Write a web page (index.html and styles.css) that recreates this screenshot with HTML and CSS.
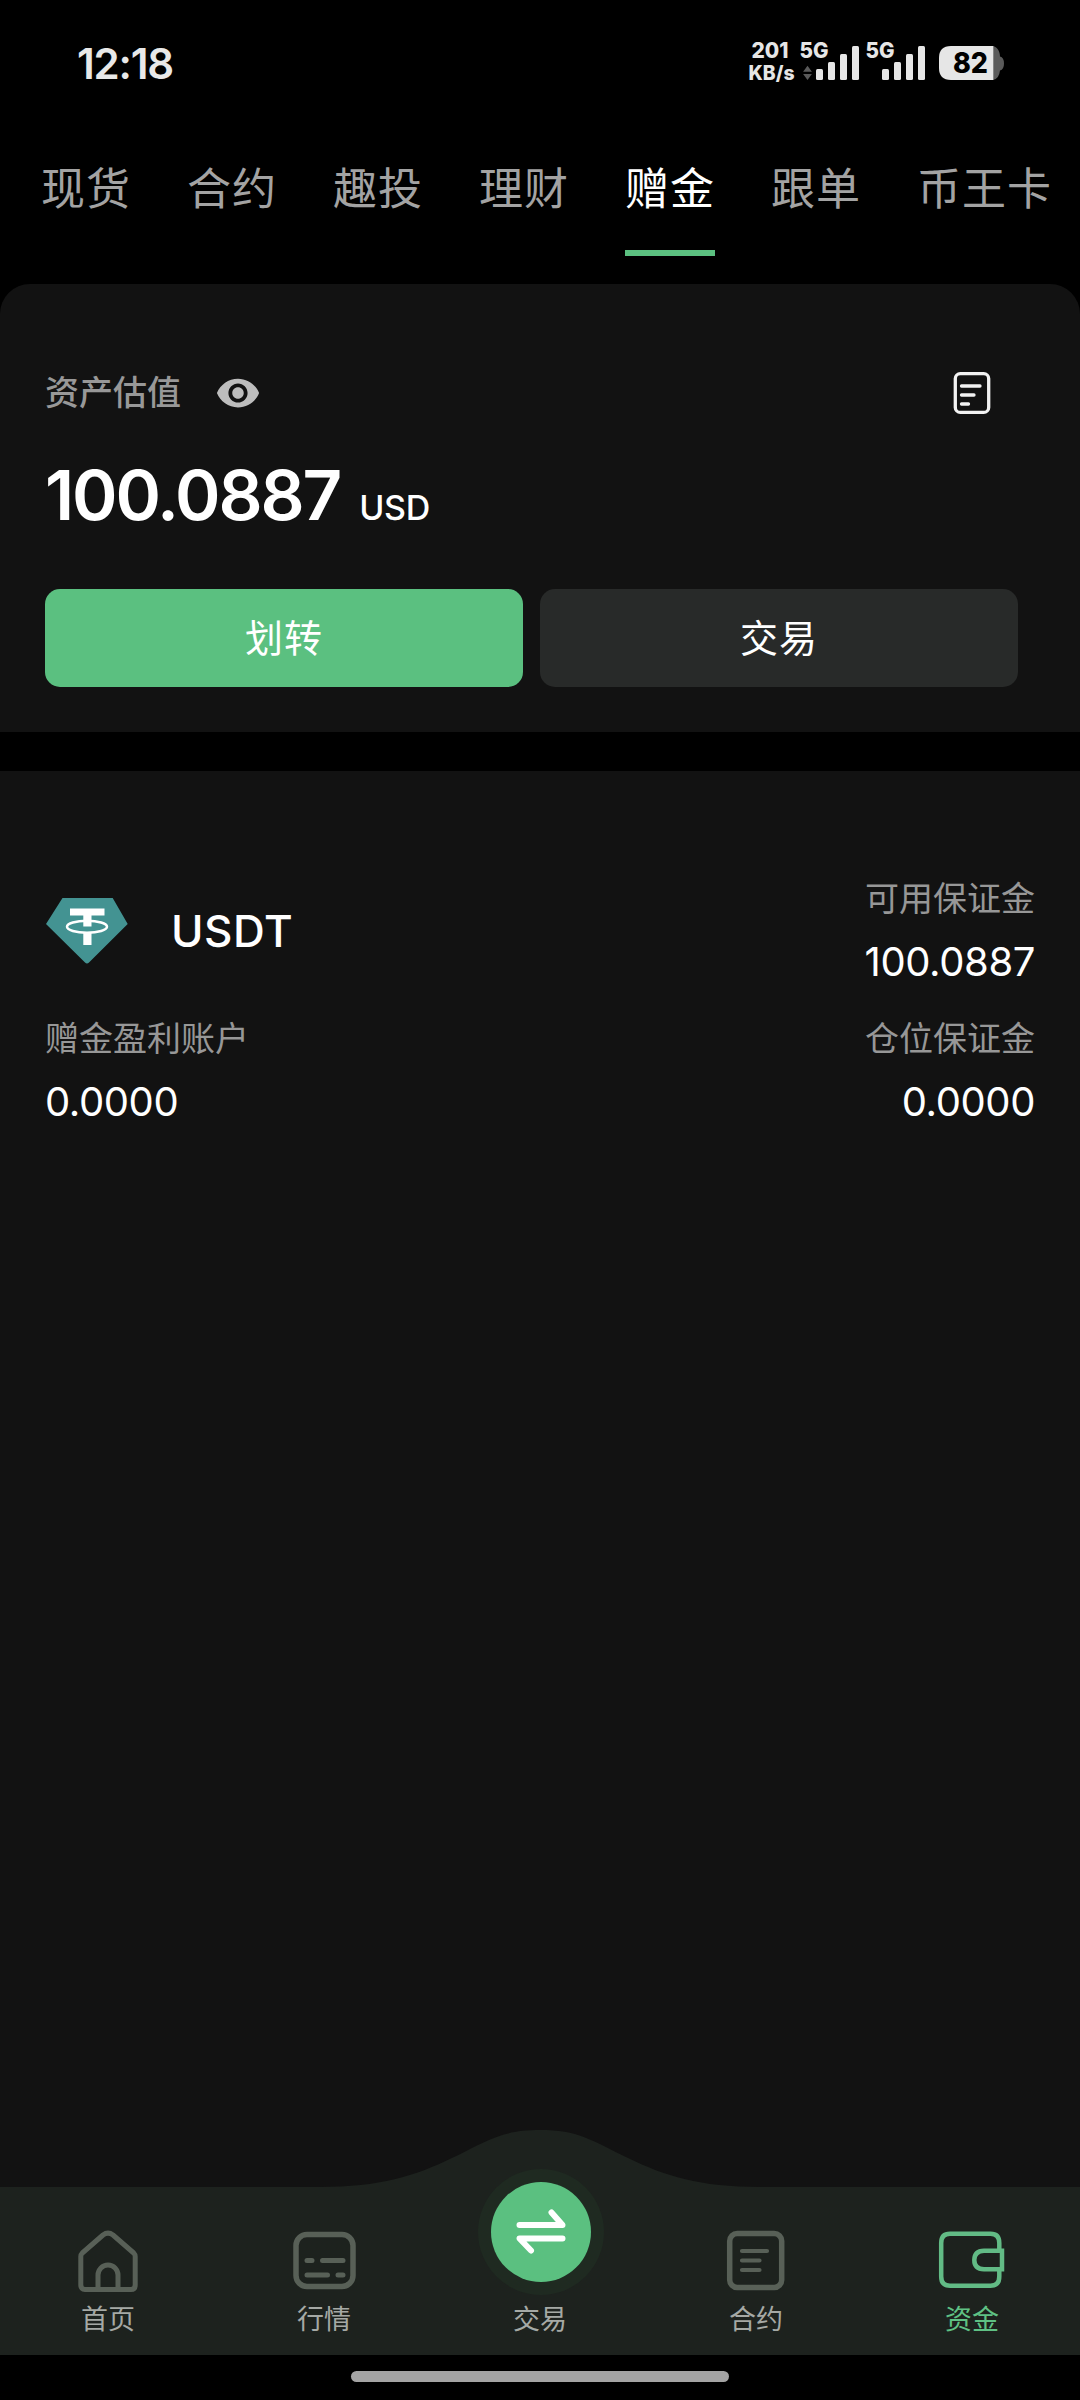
FILE: index.html
```html
<!DOCTYPE html>
<html lang="zh-CN">
<head>
<meta charset="utf-8">
<title>资金</title>
<link rel="stylesheet" href="styles.css">
</head>
<body>
<div class="screen">
  <header class="status">
    <div class="clock">12:18</div>
    <div class="status-icons">
      <svg class="speed" width="50" height="50" viewBox="0 0 50 50">
        <text x="2.500" y="20.5" font-size="22" textLength="37" lengthAdjust="spacingAndGlyphs">201</text>
        <text x="-0.500" y="43" font-size="19.500" textLength="46" lengthAdjust="spacingAndGlyphs">KB/s</text>
      </svg>
      <svg class="signal" width="60" height="44" viewBox="0 0 60 44">
        <text x="0.500" y="20.5" font-size="22" textLength="29" lengthAdjust="spacingAndGlyphs">5G</text>
        <path class="dim" d="M8.500 28.700l4.400 6h-8.800zM8.500 43l4.400-6h-8.800z"/>
        <rect x="17" y="32" width="7" height="11" rx="1.5"/><rect x="29" y="25" width="7" height="18" rx="1.5"/><rect x="41" y="17" width="7" height="26" rx="1.5"/><rect x="53" y="9" width="7" height="34" rx="1.5"/>
      </svg>
      <svg class="signal second" width="60" height="44" viewBox="0 0 60 44">
        <text x="0.500" y="20.5" font-size="22" textLength="29" lengthAdjust="spacingAndGlyphs">5G</text>
        <rect x="17" y="32" width="7" height="11" rx="1.5"/><rect x="29" y="25" width="7" height="18" rx="1.5"/><rect x="41" y="17" width="7" height="26" rx="1.5"/><rect x="53" y="9" width="7" height="34" rx="1.5"/>
      </svg>
      <svg class="battery" width="66" height="44" viewBox="0 0 66 44">
        <path class="dim" d="M54 9c4 1 7 5 7 10.500q4 1 4 7t-4 7q-1 8.500-7 9.500z"/>
        <path d="M54.300 9v34H12Q0 43 0 31V21Q0 9 12 9z"/>
        <text class="level" x="14" y="36.400" font-size="29" textLength="35" lengthAdjust="spacingAndGlyphs">82</text>
      </svg>
    </div>
  </header>

  <nav class="tabs">
    <a class="tab">现货</a>
    <a class="tab">合约</a>
    <a class="tab">趣投</a>
    <a class="tab">理财</a>
    <a class="tab active">赠金</a>
    <a class="tab">跟单</a>
    <a class="tab">币王卡</a>
  </nav>

  <section class="summary">
    <div class="summary-head">
      <span class="summary-title">资产估值</span>
      <svg class="eye" width="46" height="46" viewBox="0 0 24 24"><path d="M12 4.500C7 4.500 2.730 7.610 1 12c1.730 4.390 6 7.500 11 7.500s9.270-3.110 11-7.500c-1.730-4.390-6-7.500-11-7.500zM12 17c-2.760 0-5-2.240-5-5s2.240-5 5-5 5 2.240 5 5-2.240 5-5 5zm0-8c-1.660 0-3 1.340-3 3s1.340 3 3 3 3-1.340 3-3-1.340-3-3-3z"/></svg>
      <svg class="record" width="38" height="44" viewBox="0 0 38 44"><rect x="2.300" y="2.600" width="33.400" height="38.800" rx="5"/><path d="M8.500 15H27M8.500 24H21M8.500 33H15.500"/></svg>
    </div>
    <div class="balance"><span class="amount">100.0887</span><span class="unit">USD</span></div>
    <div class="actions">
      <button class="btn primary">划转</button>
      <button class="btn">交易</button>
    </div>
  </section>

  <main class="assets">
    <div class="asset-row">
      <div class="coin">
        <svg width="82" height="68" viewBox="0 0 82 68">
          <path class="gem" d="M16.500 1H66.700L81.700 27 43 65.500q-2 2-4 0L0 27z"/>
          <path class="mark" d="M24 11.500H58.500V18.500H45.500V29.500H37.300V18.500H24zM37.300 36H45.500V48H37.300z"/>
          <ellipse class="ring" cx="41" cy="29.700" rx="20" ry="6"/>
        </svg>
        <span class="coin-name">USDT</span>
      </div>
      <div class="field right"><span class="label">可用保证金</span><span class="value">100.0887</span></div>
    </div>
    <div class="asset-row">
      <div class="field"><span class="label">赠金盈利账户</span><span class="value">0.0000</span></div>
      <div class="field right"><span class="label">仓位保证金</span><span class="value">0.0000</span></div>
    </div>
  </main>

  <footer class="bottom">
    <svg class="bar-shape" width="1080" height="225" viewBox="0 0 1080 225"><path d="M0 57H320C380 57 415 46 452 28S502 0 540 0 591 10 628 28 700 57 760 57H1080V225H0z"/></svg>
    <div class="items">
      <a class="item">
        <svg width="66" height="66" viewBox="0 0 66 66"><path d="M5.800 27.500Q5.800 25.500 7.300 24L28 6Q33 2.200 38 6L58.700 24Q60.200 25.500 60.200 27.500V56Q60.200 60.500 56 60.500H10Q5.800 60.500 5.800 56zM23 60V46a10 10 0 0 1 20 0V60" stroke-width="5"/></svg>
        <span>首页</span>
      </a>
      <a class="item">
        <svg width="66" height="66" viewBox="0 0 66 66"><rect x="5" y="5.500" width="57" height="52" rx="11" stroke-width="5.500"/><path d="M16 31.500H21M31.500 31.500H52M16 46H36.500M47 46H52" stroke-width="5"/></svg>
        <span>行情</span>
      </a>
      <a class="item trade">
        <svg width="128" height="128" viewBox="0 0 128 128"><circle class="halo" cx="65" cy="64" r="63"/><circle class="disc" cx="65" cy="64" r="50"/><path class="swap" d="M43.500 57H86.500L75.500 44.500M86.500 70.500H43.500L55 82.500"/></svg>
        <span>交易</span>
      </a>
      <a class="item">
        <svg width="66" height="66" viewBox="0 0 66 66"><rect x="6.700" y="4.500" width="52" height="54" rx="7.500" stroke-width="5.500"/><path d="M19 22H44M19 31.500H36.500M19 41H36.500" stroke-width="4.200"/></svg>
        <span>合约</span>
      </a>
      <a class="item current">
        <svg width="66" height="66" viewBox="0 0 66 66"><path d="M60.300 21V14Q60.300 4.800 51.500 4.800H11Q2.200 4.800 2.200 14V47.500Q2.200 56.700 11 56.700H51.500Q60.300 56.700 60.300 47.500V41" stroke-width="4.500" stroke-linecap="butt"/><path d="M63 21.700H45Q35.300 22 35.300 31T45 40.300H63z" stroke-width="4.500" stroke-linejoin="miter"/></svg>
        <span>资金</span>
      </a>
    </div>
  </footer>
  <div class="gesture"><i></i></div>
</div>
</body>
</html>
```
FILE: styles.css
```css
* { box-sizing: border-box; }
body {
  margin: 0;
  background: #000;
  color: #fff;
  font-family: Inter, "Noto Sans CJK SC", sans-serif;
}
.screen {
  width: 1080px;
  height: 2400px;
  display: flex;
  flex-direction: column;
  overflow: hidden;
}
svg { display: block; flex: none; overflow: visible; }

/* status bar */
.status {
  height: 125px;
  padding: 37px 75px 0 77px;
  display: flex;
  justify-content: space-between;
  align-items: flex-start;
}
.clock {
  font-size: 42px;
  line-height: 53px;
  font-weight: 600;
  letter-spacing: -1.200px;
  color: #e8e8e8;
}
.status-icons { display: flex; }
.status-icons svg { fill: #e6e6e6; font-weight: 800; }
.status-icons .dim { fill: #5a5a5a; }
.status-icons .level { fill: #000; }
.signal.second { margin-left: 6px; }
.battery { margin-left: 14px; }

/* account tabs */
.tabs {
  height: 131px;
  padding-left: 41px;
  display: flex;
  gap: 56px;
}
.tab {
  flex: none;
  height: 131px;
  font-size: 44px;
  letter-spacing: 1px;
  line-height: 129px;
  color: #a3a3a3;
  white-space: nowrap;
}
.tab.active { color: #fff; border-bottom: 6px solid #5bc080; }

/* balance summary */
.summary {
  height: 448px;
  margin-top: 28px;
  padding: 83px 62px 0 45px;
  background: #121212;
  border-radius: 30px 30px 0 0;
}
.summary-head { height: 52px; display: flex; align-items: center; }
.summary-title { font-size: 34px; line-height: 50px; font-weight: 500; color: #989898; }
.eye { margin-left: 34px; fill: #bdbdbd; }
.record {
  margin: 0 27px 0 auto;
  fill: none;
  stroke: #f2f2f2;
  stroke-width: 3.300;
  stroke-linecap: round;
}
.balance {
  height: 170px;
  padding-top: 32px;
  display: flex;
  align-items: baseline;
  line-height: 88px;
}
.amount { font-size: 69px; font-weight: 600; letter-spacing: -2.100px; }
.unit { font-size: 34px; font-weight: 500; letter-spacing: -0.300px; margin-left: 19px; }
.actions { display: flex; gap: 17px; }
.btn {
  flex: 1;
  height: 98px;
  padding: 0;
  border: 0;
  border-radius: 15px;
  background: #282a29;
  color: #fff;
  font: 400 38px/98px Inter, "Noto Sans CJK SC", sans-serif;
  letter-spacing: 1px;
}
.btn.primary { background: #5bc080; }

/* asset list */
.assets {
  flex: 1;
  margin-top: 39px;
  padding: 102px 45px 0;
  background: #121212;
}
.asset-row { height: 140px; display: flex; justify-content: space-between; }
.coin { display: flex; gap: 43px; padding: 24px 0 0 1px; }
.coin-name { font-size: 44px; line-height: 68px; font-weight: 500; letter-spacing: 0.500px; }
.coin .gem { fill: #439392; }
.coin .mark { fill: #fff; }
.coin .ring { fill: none; stroke: #fff; stroke-width: 2.500; }
.field { display: flex; flex-direction: column; }
.field.right { align-items: flex-end; }
.label { font-size: 34px; line-height: 52px; color: #979797; }
.value { font-size: 40px; line-height: 52px; margin-top: 11px; letter-spacing: -0.400px; }

/* bottom navigation */
.bottom { height: 225px; background: #121212; position: relative; }
.bar-shape { position: absolute; inset: 0; fill: #1d221e; }
.items { position: relative; height: 225px; display: flex; align-items: flex-end; padding-bottom: 15px; }
.item {
  flex: 1;
  display: flex;
  flex-direction: column;
  align-items: center;
  gap: 5px;
  font-size: 27px;
  line-height: 40px;
  color: #a5a9a5;
}
.item svg {
  fill: none;
  stroke: #586057;
  stroke-linecap: round;
  stroke-linejoin: round;
}
.item.trade { gap: 4px; }
.trade .halo { fill: #1f2a21; stroke: none; }
.trade .disc { fill: #5bc080; stroke: none; }
.item.trade .swap { stroke: #fff; stroke-width: 6; }
.item.current { color: #5fc184; }
.item.current svg { stroke: #62bb85; }
.gesture { height: 45px; display: flex; justify-content: center; padding-top: 16px; }
.gesture i { width: 378px; height: 11px; border-radius: 6px; background: #a4a4a4; }
```
